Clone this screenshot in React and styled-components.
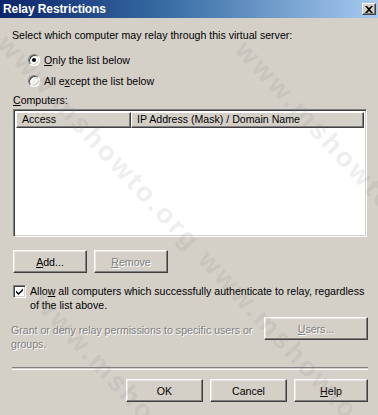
import React from "react";
import styled, { createGlobalStyle, css } from "styled-components";

const Global = createGlobalStyle`
  html, body { margin: 0; padding: 0; }
  body {
    width: 378px;
    height: 415px;
    overflow: hidden;
    background: #d4d0c8;
    font-family: "Liberation Sans", Arial, sans-serif;
    font-size: 10.6px;
    color: #000;
  }
`;

const Dialog = styled.div`
  position: relative;
  width: 378px;
  height: 415px;
  background: #d4d0c8;
  overflow: hidden;
  display: flex;
  flex-direction: column;
`;

const TitleBar = styled.div`
  height: 18px;
  flex: none;
  display: flex;
  align-items: center;
  justify-content: space-between;
  padding: 0 2px 0 3px;
  background: linear-gradient(to right, #0a246a 0%, #3a6ea5 45%, #a6caf0 100%);
`;

const Title = styled.span`
  color: #fff;
  font-weight: bold;
  font-size: 12px;
  letter-spacing: -0.1px;
`;

const CloseBtn = styled.div`
  width: 14px;
  height: 12px;
  box-sizing: border-box;
  background: #d4d0c8;
  border: 1px solid;
  border-color: #fff #404040 #404040 #fff;
  box-shadow: inset -1px -1px #808080;
  display: flex;
  align-items: center;
  justify-content: center;
`;

const Body = styled.div`
  display: flex;
  flex-direction: column;
  padding: 0 10px 0 13px;
`;

const Text = styled.div`
  line-height: 14px;
  white-space: nowrap;
  ${(p) =>
    p.disabled &&
    css`
      color: #808080;
      text-shadow: 1px 1px 0 #fff;
    `}
`;

const Prompt = styled(Text)`
  margin-top: 10px;
  margin-left: -1px;
`;

const RadioGroup = styled.div`
  display: flex;
  flex-direction: column;
  gap: 7px;
  margin-top: 11px;
  padding-left: 15px;
`;

const RadioRow = styled.label`
  display: flex;
  align-items: center;
  gap: 4px;
  height: 14px;
`;

const RadioCircle = styled.span`
  width: 12px;
  height: 12px;
  box-sizing: border-box;
  border-radius: 50%;
  background: #fff;
  border: 1px solid;
  border-color: #808080 #fff #fff #808080;
  box-shadow: inset 1px 1px #404040, inset -1px -1px #d4d0c8;
  display: flex;
  align-items: center;
  justify-content: center;
  &::after {
    content: "";
    width: 4px;
    height: 4px;
    border-radius: 50%;
    background: ${(p) => (p.checked ? "#000" : "transparent")};
  }
`;

const Label = styled(Text)`
  margin-top: 5px;
`;

const ListBox = styled.div`
  margin-top: 2px;
  height: 128px;
  width: 354px;
  box-sizing: border-box;
  background: #fff;
  border: 1px solid;
  border-color: #808080 #fff #fff #808080;
  box-shadow: inset 1px 1px #404040, inset -1px -1px #d4d0c8;
  padding: 2px;
`;

const Header = styled.div`
  display: flex;
  height: 16px;
`;

const HeaderCell = styled.div`
  width: ${(p) => p.w};
  flex: ${(p) => (p.grow ? 1 : "none")};
  box-sizing: border-box;
  background: #d4d0c8;
  border: 1px solid;
  border-color: #fff #404040 #404040 #fff;
  box-shadow: inset -1px -1px #808080;
  padding-left: 5px;
  line-height: 13px;
  white-space: nowrap;
`;

const ButtonRow = styled.div`
  display: flex;
  gap: ${(p) => p.gap || 7}px;
  justify-content: ${(p) => (p.end ? "flex-end" : "flex-start")};
  margin-top: ${(p) => p.mt || 0}px;
`;

const Button = styled.div`
  width: ${(p) => p.w || 74}px;
  height: 23px;
  flex: none;
  box-sizing: border-box;
  border: 1px solid;
  border-color: #fff #404040 #404040 #fff;
  box-shadow: inset -1px -1px #808080, inset 1px 1px #e8e6e0;
  background: #d4d0c8;
  display: flex;
  align-items: center;
  justify-content: center;
  margin-top: ${(p) => p.mt || 0}px;
  ${(p) =>
    p.disabled &&
    css`
      color: #808080;
      text-shadow: 1px 1px 0 #fff;
    `}
`;

const CheckRow = styled.div`
  display: flex;
  align-items: flex-start;
  gap: 4px;
  margin-top: 11px;
`;

const CheckBox = styled.span`
  flex: none;
  width: 13px;
  height: 13px;
  box-sizing: border-box;
  margin-top: 1px;
  background: #fff;
  border: 1px solid;
  border-color: #808080 #fff #fff #808080;
  box-shadow: inset 1px 1px #404040, inset -1px -1px #d4d0c8;
  display: flex;
  align-items: center;
  justify-content: center;
`;

const WrapText = styled.div`
  line-height: 14px;
  width: ${(p) => p.w}px;
  ${(p) =>
    p.disabled &&
    css`
      color: #808080;
      text-shadow: 1px 1px 0 #fff;
    `}
`;

const GrantRow = styled.div`
  display: flex;
  justify-content: space-between;
  align-items: flex-start;
  margin-top: 11px;
  margin-left: -2px;
`;

const Separator = styled.div`
  margin-top: 16px;
  height: 1px;
  width: 356px;
  border-top: 1px solid #808080;
  border-bottom: 1px solid #fff;
  margin-left: -1px;
`;

const Watermark = styled.div`
  position: absolute;
  inset: 0;
  pointer-events: none;
  overflow: hidden;
`;

const Mark = styled.span`
  position: absolute;
  left: ${(p) => p.x}px;
  top: ${(p) => p.y}px;
  transform-origin: 0 50%;
  transform: rotate(47deg);
  font-family: "Liberation Sans", Arial, sans-serif;
  font-weight: bold;
  font-size: 27px;
  letter-spacing: 3px;
  white-space: nowrap;
  color: rgba(120, 120, 120, 0.14);
`;

const U = styled.span`
  text-decoration: underline;
`;

export default function App() {
  return (
    <>
      <Global />
      <Dialog>
        <TitleBar>
          <Title>Relay Restrictions</Title>
          <CloseBtn>
            <svg width="8" height="7" viewBox="0 0 8 7">
              <path d="M0 0h2l2 2 2-2h2L5 3.5 8 7H6L4 5 2 7H0l3-3.5z" fill="#000" />
            </svg>
          </CloseBtn>
        </TitleBar>
        <Body>
          <Prompt>Select which computer may relay through this virtual server:</Prompt>
          <RadioGroup>
            <RadioRow>
              <RadioCircle checked />
              <Text>
                <U>O</U>nly the list below
              </Text>
            </RadioRow>
            <RadioRow>
              <RadioCircle />
              <Text>
                All e<U>x</U>cept the list below
              </Text>
            </RadioRow>
          </RadioGroup>
          <Label>
            <U>C</U>omputers:
          </Label>
          <ListBox>
            <Header>
              <HeaderCell w="115px">Access</HeaderCell>
              <HeaderCell grow>IP Address (Mask) / Domain Name</HeaderCell>
            </Header>
          </ListBox>
          <ButtonRow mt={13} gap={7}>
            <Button w={74}>
              <span>
                <U>A</U>dd...
              </span>
            </Button>
            <Button w={74} disabled>
              <span>
                <U>R</U>emove
              </span>
            </Button>
          </ButtonRow>
          <CheckRow>
            <CheckBox>
              <svg width="7" height="7" viewBox="0 0 7 7">
                <path d="M0 2.5l2.5 2.5L7 0.5v2L2.5 7 0 4.5z" fill="#000" />
              </svg>
            </CheckBox>
            <WrapText w={338}>
              Allo<U>w</U> all computers which successfully authenticate to relay, regardless of the list above.
            </WrapText>
          </CheckRow>
          <GrantRow>
            <WrapText w={245} disabled>
              Grant or deny relay permissions to specific users or groups.
            </WrapText>
            <Button w={104} mt={-6} disabled>
              <span>
                <U>U</U>sers...
              </span>
            </Button>
          </GrantRow>
          <Separator />
          <ButtonRow mt={9} gap={7} end>
            <Button w={77}>OK</Button>
            <Button w={77}>Cancel</Button>
            <Button w={74}>
              <span>
                <U>H</U>elp
              </span>
            </Button>
          </ButtonRow>
        </Body>
        <Watermark>
          <Mark x={2} y={24}>www.mshowto.org www.mshowto.org</Mark>
          <Mark x={240} y={30}>www.mshowto.org</Mark>
          <Mark x={38} y={282}>www.mshowto.org</Mark>
        </Watermark>
      </Dialog>
    </>
  );
}
